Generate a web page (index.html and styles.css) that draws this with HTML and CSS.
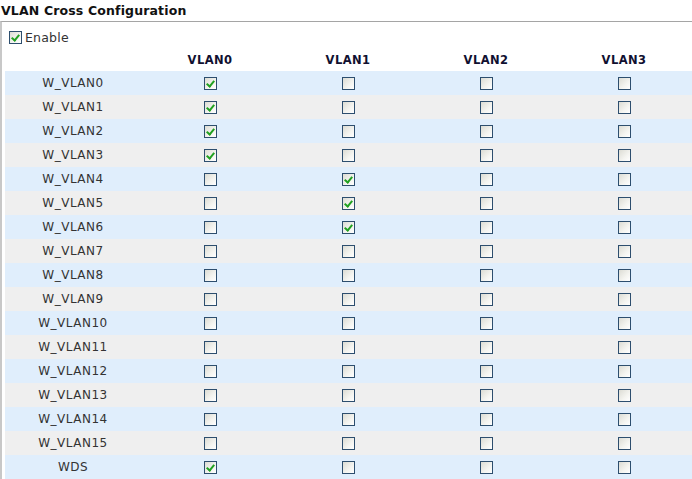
FILE: index.html
```html
<!DOCTYPE html>
<html>
<head>
<meta charset="utf-8">
<link rel="stylesheet" href="styles.css">
</head>
<body>
<div class="title">VLAN Cross Configuration</div>
<div class="box">
  <label class="enable"><span class="cb on"></span>Enable</label>
  <div class="grid" id="grid">
    <div class="hrow">
      <div></div><div class="h">VLAN0</div><div class="h">VLAN1</div><div class="h">VLAN2</div><div class="h">VLAN3</div>
    </div>
    <div class="row b"><div class="lab">W_VLAN0</div><div class="c"><span class="cb on"></span></div><div class="c"><span class="cb"></span></div><div class="c"><span class="cb"></span></div><div class="c"><span class="cb"></span></div></div>
    <div class="row g"><div class="lab">W_VLAN1</div><div class="c"><span class="cb on"></span></div><div class="c"><span class="cb"></span></div><div class="c"><span class="cb"></span></div><div class="c"><span class="cb"></span></div></div>
    <div class="row b"><div class="lab">W_VLAN2</div><div class="c"><span class="cb on"></span></div><div class="c"><span class="cb"></span></div><div class="c"><span class="cb"></span></div><div class="c"><span class="cb"></span></div></div>
    <div class="row g"><div class="lab">W_VLAN3</div><div class="c"><span class="cb on"></span></div><div class="c"><span class="cb"></span></div><div class="c"><span class="cb"></span></div><div class="c"><span class="cb"></span></div></div>
    <div class="row b"><div class="lab">W_VLAN4</div><div class="c"><span class="cb"></span></div><div class="c"><span class="cb on"></span></div><div class="c"><span class="cb"></span></div><div class="c"><span class="cb"></span></div></div>
    <div class="row g"><div class="lab">W_VLAN5</div><div class="c"><span class="cb"></span></div><div class="c"><span class="cb on"></span></div><div class="c"><span class="cb"></span></div><div class="c"><span class="cb"></span></div></div>
    <div class="row b"><div class="lab">W_VLAN6</div><div class="c"><span class="cb"></span></div><div class="c"><span class="cb on"></span></div><div class="c"><span class="cb"></span></div><div class="c"><span class="cb"></span></div></div>
    <div class="row g"><div class="lab">W_VLAN7</div><div class="c"><span class="cb"></span></div><div class="c"><span class="cb"></span></div><div class="c"><span class="cb"></span></div><div class="c"><span class="cb"></span></div></div>
    <div class="row b"><div class="lab">W_VLAN8</div><div class="c"><span class="cb"></span></div><div class="c"><span class="cb"></span></div><div class="c"><span class="cb"></span></div><div class="c"><span class="cb"></span></div></div>
    <div class="row g"><div class="lab">W_VLAN9</div><div class="c"><span class="cb"></span></div><div class="c"><span class="cb"></span></div><div class="c"><span class="cb"></span></div><div class="c"><span class="cb"></span></div></div>
    <div class="row b"><div class="lab">W_VLAN10</div><div class="c"><span class="cb"></span></div><div class="c"><span class="cb"></span></div><div class="c"><span class="cb"></span></div><div class="c"><span class="cb"></span></div></div>
    <div class="row g"><div class="lab">W_VLAN11</div><div class="c"><span class="cb"></span></div><div class="c"><span class="cb"></span></div><div class="c"><span class="cb"></span></div><div class="c"><span class="cb"></span></div></div>
    <div class="row b"><div class="lab">W_VLAN12</div><div class="c"><span class="cb"></span></div><div class="c"><span class="cb"></span></div><div class="c"><span class="cb"></span></div><div class="c"><span class="cb"></span></div></div>
    <div class="row g"><div class="lab">W_VLAN13</div><div class="c"><span class="cb"></span></div><div class="c"><span class="cb"></span></div><div class="c"><span class="cb"></span></div><div class="c"><span class="cb"></span></div></div>
    <div class="row b"><div class="lab">W_VLAN14</div><div class="c"><span class="cb"></span></div><div class="c"><span class="cb"></span></div><div class="c"><span class="cb"></span></div><div class="c"><span class="cb"></span></div></div>
    <div class="row g"><div class="lab">W_VLAN15</div><div class="c"><span class="cb"></span></div><div class="c"><span class="cb"></span></div><div class="c"><span class="cb"></span></div><div class="c"><span class="cb"></span></div></div>
    <div class="row b"><div class="lab">WDS</div><div class="c"><span class="cb on"></span></div><div class="c"><span class="cb"></span></div><div class="c"><span class="cb"></span></div><div class="c"><span class="cb"></span></div></div>
  </div>
</div>
</body>
</html>
```
FILE: styles.css
```css
html, body {
  margin: 0;
  padding: 0;
  background: #ffffff;
  overflow: hidden;
}
body {
  font-family: "DejaVu Sans", Verdana, sans-serif;
  font-size: 12px;
  color: #333333;
  width: 692px;
  height: 479px;
}
.title {
  font-weight: bold;
  font-size: 12.5px;
  letter-spacing: 0.15px;
  color: #111;
  height: 21px;
  line-height: 21px;
  padding-left: 1px;
}
.box {
  border-top: 1px solid #a5a5a5;
  border-left: 2px solid #c8c8c8;
  margin-left: 0;
  padding: 5px 0 0 3px;
  width: 700px;
}
.enable {
  display: flex;
  align-items: center;
  height: 20px;
  padding-left: 4px;
  gap: 3px;
  font-size: 12.5px;
  letter-spacing: 0.2px;
  color: #333;
}
.grid {
  width: 700px;
}
.hrow, .row {
  display: grid;
  grid-template-columns: 136px 138px 138px 138px 138px;
  align-items: center;
}
.hrow {
  height: 24px;
}
.row {
  height: 24px;
}
.row.b { background: #e0eefc; }
.row.g { background: #efefef; }
.h {
  text-align: center;
  font-weight: bold;
  font-size: 11.5px;
  letter-spacing: 0.4px;
  color: #101030;
  padding-top: 2px;
}
.lab {
  text-align: center;
  font-size: 12px;
  letter-spacing: 0.5px;
  color: #333;
}
.c {
  display: flex;
  justify-content: center;
  align-items: center;
}
.cb {
  display: inline-block;
  box-sizing: border-box;
  width: 13px;
  height: 13px;
  border: 1px solid #2d4e6e;
  background: linear-gradient(135deg, #dcdcd4 0%, #f4f4f0 60%, #ffffff 100%);
  position: relative;
}
.cb.on::after {
  content: "";
  position: absolute;
  left: 3px;
  top: 1px;
  width: 3px;
  height: 6px;
  border-right: 2px solid #21a121;
  border-bottom: 2px solid #21a121;
  transform: rotate(40deg);
}
```
